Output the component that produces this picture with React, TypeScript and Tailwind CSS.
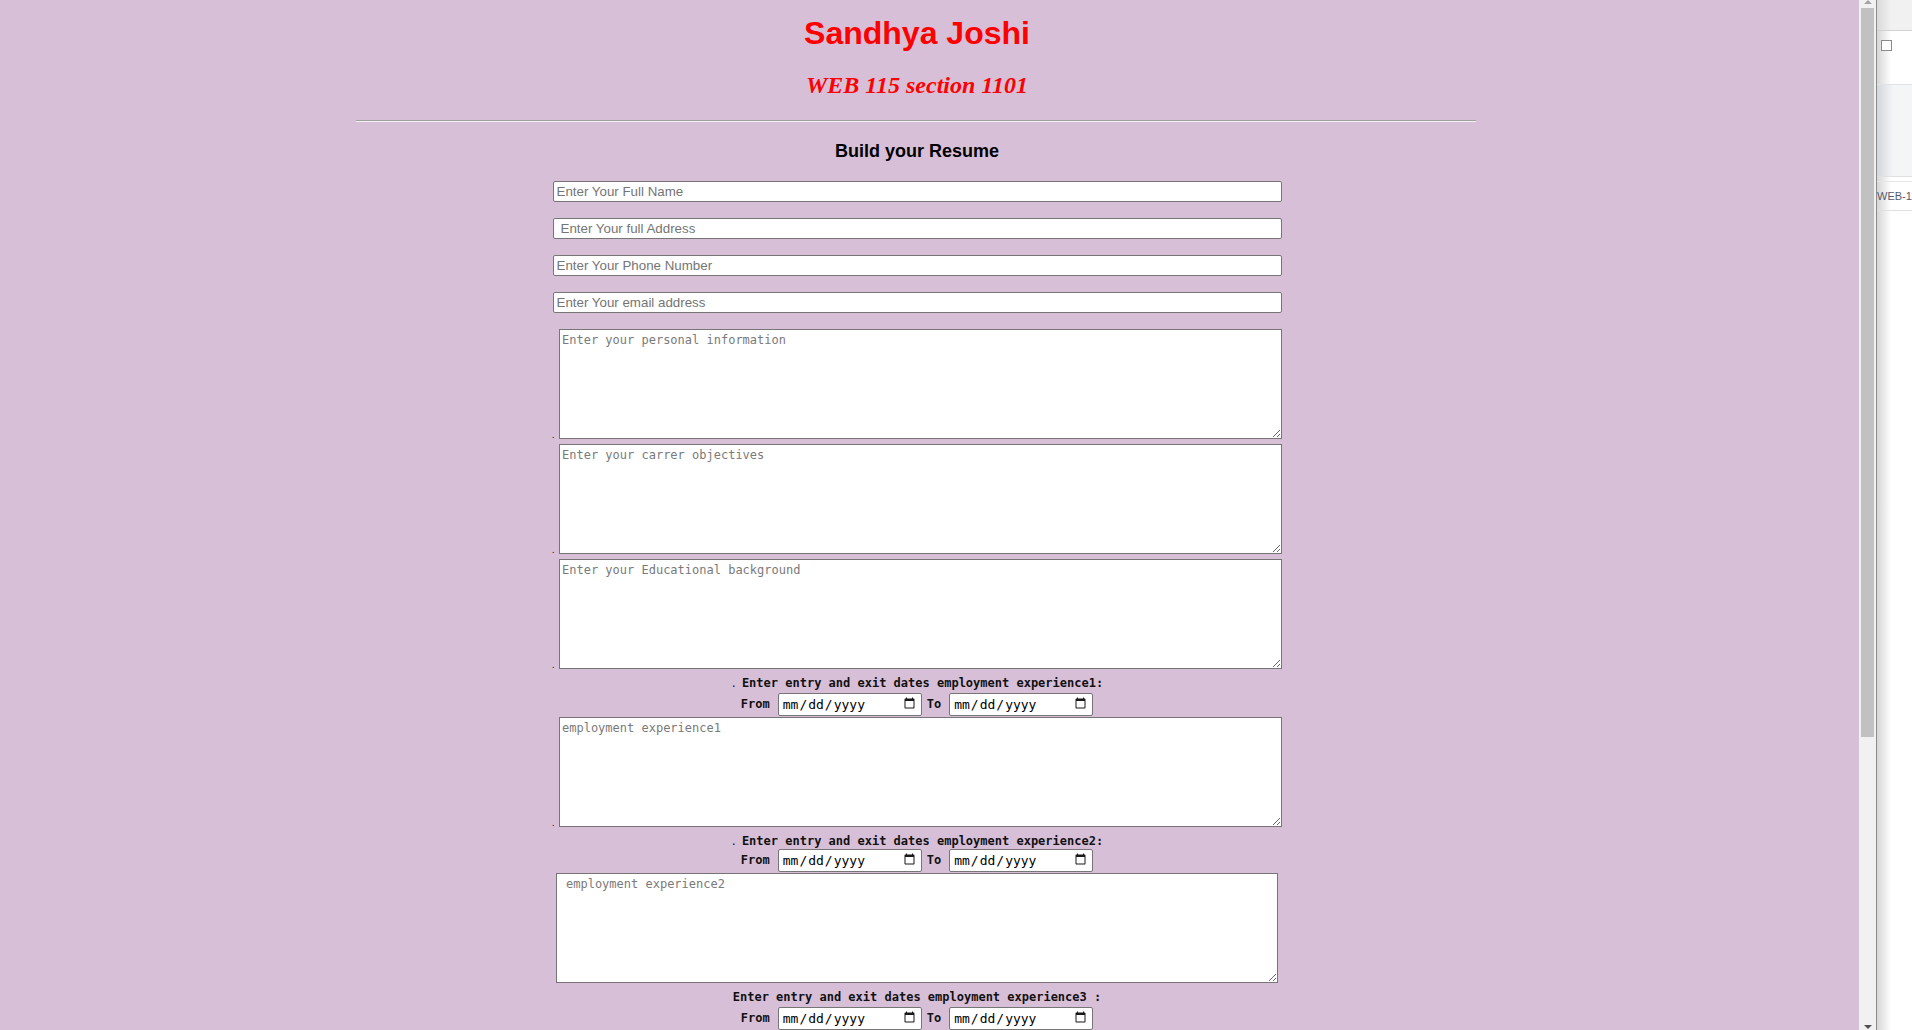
const mono = "font-['DejaVu_Sans_Mono','Liberation_Mono',monospace]";

const contactFields = [
  { placeholder: "Enter Your Full Name", pad: "pl-[3px]" },
  { placeholder: "Enter Your full Address", pad: "pl-[7px]" },
  { placeholder: "Enter Your Phone Number", pad: "pl-[3px]" },
  { placeholder: "Enter Your email address", pad: "pl-[3px]" },
];

const aboutBoxes = [
  "Enter your personal information",
  "Enter your carrer objectives",
  "Enter your Educational background",
];

function NoteBox({ placeholder, dot = true }: { placeholder: string; dot?: boolean }) {
  return (
    <div className="mb-[5px] flex items-end justify-center">
      {dot && <span className="w-[7px] text-left text-[9px] leading-[9px] text-black">.</span>}
      <textarea
        placeholder={placeholder}
        className={`${mono} block h-[110px] ${
          dot ? "w-[723px] px-[2px]" : "w-[722px] px-[9px]"
        } resize border border-[#767676] bg-white py-[2px] text-left text-[12px] leading-[16px] text-black placeholder:text-[#7a7a7a]`}
      />
    </div>
  );
}

function DateRow() {
  const field = `${mono} h-[23px] w-[144px] rounded-[2px] border border-[#767676] bg-white px-[3px] text-left text-[13px] font-normal text-black [&::-webkit-calendar-picker-indicator]:h-[15px] [&::-webkit-calendar-picker-indicator]:w-[13px] [&::-webkit-calendar-picker-indicator]:opacity-90`;
  return (
    <div className={`${mono} flex h-[24px] items-start justify-center text-[12px] font-bold text-[#111]`}>
      <span className="mr-[8px] leading-[23px]">From</span>
      <input type="date" className={field} />
      <span className="ml-[5px] mr-[8px] leading-[23px]">To</span>
      <input type="date" className={field} />
    </div>
  );
}

function DatesLabel({ text, dot, height }: { text: string; dot: boolean; height: string }) {
  return (
    <p className={`${mono} ${height} text-[12px] font-bold leading-[19px] text-[#111]`}>
      {dot && <span className="mr-[5px] text-[10px] font-normal">.</span>}
      {text}
    </p>
  );
}

function Scrollbar() {
  return (
    <div className="flex h-full w-[17px] shrink-0 flex-col items-center bg-[#f1f1f1]">
      <div className="h-0 w-0 border-x-[4px] border-b-[4px] border-x-transparent border-b-[#a3a3a3]" />
      <div className="mt-[4px] h-[729px] w-[13px] bg-[#c1c1c1]" />
      <div className="flex-1" />
      <div className="mb-[1px] h-0 w-0 border-x-[4px] border-t-[4px] border-x-transparent border-t-[#505050]" />
    </div>
  );
}

function SidePanel() {
  return (
    <aside className="h-full flex-1 overflow-hidden border-l border-[#8c8c8c] bg-[linear-gradient(to_right,#d6d6d6,#ffffff_14px)]">
      <div className="h-[31px] border-b border-[#d2d2d2] bg-[linear-gradient(to_right,#d9d9d9,#f1f1f1_14px)]" />
      <div className="h-[54px] border-b border-[#e2e2e2] pl-[4px] pt-[9px]">
        <div className="h-[11px] w-[11px] border border-[#8a8a8a] bg-white" />
      </div>
      <div className="h-[92px] border-b border-[#e0e0e0] bg-[linear-gradient(to_right,#d3d6dc,#f4f5f7_16px)]" />
      <div className="h-[5px] border-b border-[#e6e6e6]" />
      <div className="h-[29px] border-b border-[#e0e0e0] pt-[8px]">
        <span className="block whitespace-nowrap font-['Liberation_Sans',Arial,sans-serif] text-[11px] leading-[13px] text-[#555a70]">
          WEB-115
        </span>
      </div>
    </aside>
  );
}

export default function App() {
  return (
    <div className="flex h-screen w-full overflow-hidden bg-white">
      <main className="h-full w-[1859px] shrink-0 overflow-hidden bg-[#d8bfd8]">
        <div className="ml-[356px] w-[1122px] text-center">
          <h1 className="pt-[15px] font-['Liberation_Sans',Arial,sans-serif] text-[32px] font-bold leading-[37px] text-[#ff0000]">
            Sandhya Joshi
          </h1>
          <h2 className="mt-[20px] font-['Liberation_Serif','Times_New_Roman',serif] text-[24px] font-bold italic leading-[27px] text-[#ff0000]">
            WEB 115 section 1101
          </h2>
          <hr className="mt-[21px] h-0 w-[1120px] border-t border-b border-t-[#a0a0a0] border-b-[#f2f2f2]" />
          <h3 className="mt-[19px] font-['Liberation_Sans',Arial,sans-serif] text-[18px] font-bold leading-[21px] text-black">
            Build your Resume
          </h3>

          <form className="mt-[19px] flex flex-col items-center">
            {contactFields.map((f) => (
              <input
                key={f.placeholder}
                type="text"
                placeholder={f.placeholder}
                className={`mb-[16px] h-[21px] w-[729px] rounded-[2px] border border-[#767676] bg-white ${f.pad} font-['Liberation_Sans',Arial,sans-serif] text-[13.33px] text-black placeholder:text-[#757575]`}
              />
            ))}

            {aboutBoxes.map((p) => (
              <NoteBox key={p} placeholder={p} />
            ))}

            <DatesLabel text="Enter entry and exit dates employment experience1:" dot height="h-[19px]" />
            <DateRow />
            <NoteBox placeholder="employment experience1" />

            <DatesLabel text="Enter entry and exit dates employment experience2:" dot height="h-[17px]" />
            <DateRow />
            <NoteBox placeholder="employment experience2" dot={false} />

            <DatesLabel text="Enter entry and exit dates employment experience3 :" dot={false} height="h-[19px]" />
            <DateRow />
            <NoteBox placeholder="employment experience3" dot={false} />
          </form>
        </div>
      </main>
      <Scrollbar />
      <SidePanel />
    </div>
  );
}
